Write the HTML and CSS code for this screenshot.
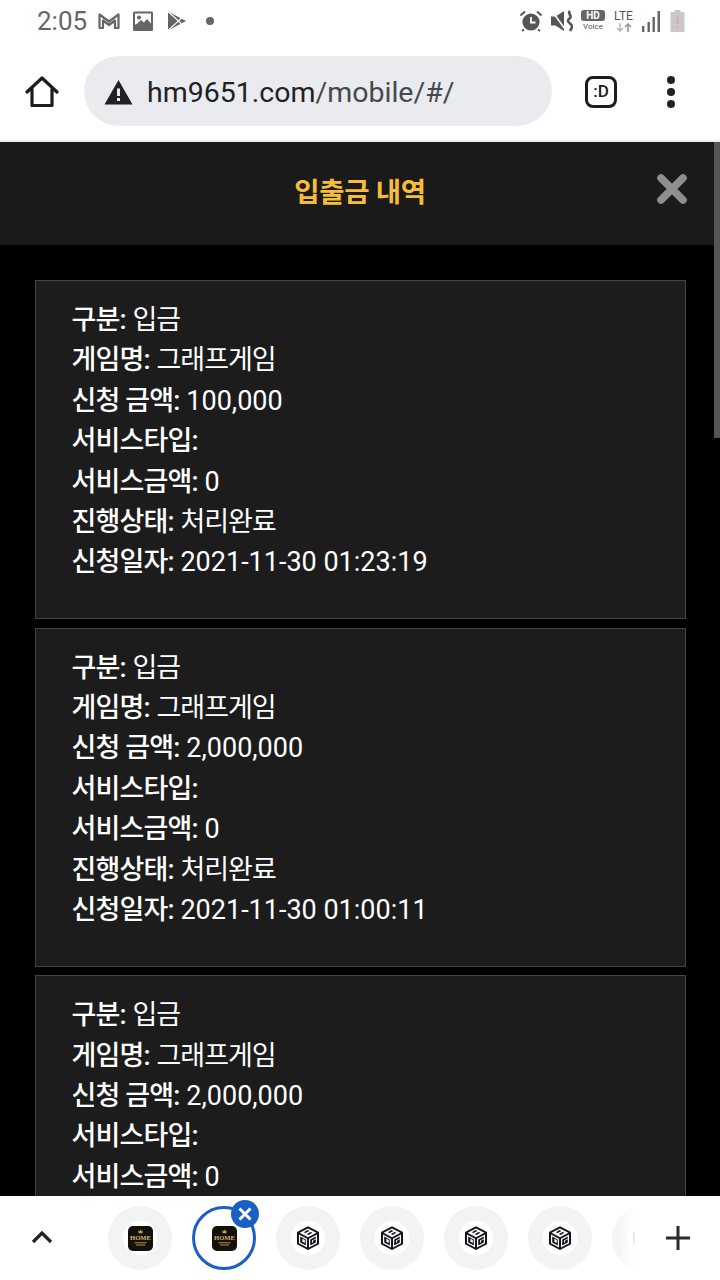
FILE: index.html
```html
<!DOCTYPE html>
<html lang="ko">
<head>
  <meta charset="utf-8"/>
  <meta name="viewport" content="width=device-width, initial-scale=1.0"/>
  <title>입출금 내역</title>
  <link rel="stylesheet" href="styles.css">
</head>
<body>

  <!-- Shared icons -->
  <svg class="defs" width="0" height="0">
    <symbol id="cube" viewBox="0 0 26 26">
      <path d="M13 1.2 24 7V19.2L13 25 2 19.2V7Z" fill="#16141c"/>
      <path d="M13 3.4 21.4 7.8 13 12.2 4.6 7.8Z" fill="#fff"/>
      <path d="M4 9.6 12 13.8V22.4L4 18.2Z" fill="#fff"/>
      <path d="M22 9.6 14 13.8V22.4L22 18.2Z" fill="#fff"/>
      <path d="M5.2 11.4 10.8 14.4V20.6L5.2 17.6Z" fill="#16141c"/>
      <path d="M7.4 13.8 9.8 15.1V18L7.4 16.7Z" fill="#fff"/>
      <path d="M20.8 11.4 15.2 14.4V20.6L20.8 17.6V14.2L18 15.7V17.2L17 17.8V15.4L20.8 13.4Z" fill="#16141c"/>
      <path d="M8.8 7.2 12.6 5.1 14.4 6 10.6 8.1ZM11.8 9 15.6 6.9 17.4 7.8 13.6 9.9Z" fill="#16141c"/>
    </symbol>
  </svg>

  <!-- Status bar -->
  <div class="status-bar">
    <div class="status-left">
      <span class="clock">2:05</span>
      <svg class="st-icon" width="24" height="18" viewBox="0 0 24 18"><path d="M2.5 16V2.5L12 9.5 21.5 2.5V16H18V8.5L12 13 6 8.5V16Z" fill="none" stroke="#666" stroke-width="2.2" stroke-linejoin="round"/></svg>
      <svg class="st-icon" width="22" height="20" viewBox="0 0 22 20"><rect x="1" y="0.5" width="20" height="19.5" rx="1.5" fill="#666"/><rect x="3" y="2.5" width="16" height="11" fill="#fff"/><circle cx="7" cy="6.5" r="2" fill="#666"/><path d="M3 14.5 9 9 12 11.5 15 8 19 12.5V14.5Z" fill="#666"/></svg>
      <svg class="st-icon play" width="20" height="20" viewBox="0 0 20 20"><path d="M1 0.5 19 10 1 19.5Z" fill="#666"/><path d="M1 .5 11.5 10 1 19.5M11.5 10 15 6.5M11.5 10 15 13.5" fill="none" stroke="#fff" stroke-width="1.1"/></svg>
      <span class="dot"></span>
    </div>
    <div class="status-right">
      <svg width="24" height="22" viewBox="0 0 24 22"><circle cx="12" cy="12" r="8.6" fill="#555"/><path d="M12 7V12.5H16.5" fill="none" stroke="#fff" stroke-width="1.8"/><path d="M1.5 5.5 6 1.5M22.5 5.5 18 1.5M5 19.5 3 21M19 19.5 21 21" stroke="#555" stroke-width="2"/></svg>
      <svg width="22" height="22" viewBox="0 0 22 22"><path d="M0 6.5H4.5L13 1V21L4.5 15.5H0Z" fill="#555"/><path d="M1 1 15 20.5" stroke="#fff" stroke-width="1.6"/><path d="M19 1C16 4 21.5 5.5 19 8S16 11 19 13.5 21.5 17 19 21" fill="none" stroke="#555" stroke-width="2.6"/></svg>
      <div class="hd-voice"><span class="hd">HD</span><span class="voice">Voice</span></div>
      <div class="lte"><span>LTE</span><svg width="16" height="9" viewBox="0 0 16 9"><path d="M4 0V8M1 5 4 8 7 5" fill="none" stroke="#bbb" stroke-width="1.6"/><path d="M12 9V1M9 4 12 1 15 4" fill="none" stroke="#999" stroke-width="1.6"/></svg></div>
      <svg class="signal" width="19" height="21" viewBox="0 0 19 21"><path d="M1 15H3.4V21H1ZM6.5 11H8.9V21H6.5ZM11.5 6H13.9V21H11.5ZM16.5 0H19V21H16.5Z" fill="#666"/></svg>
      <svg width="15" height="22" viewBox="0 0 15 22"><path d="M4.5 0H10.5V2H14.5V22H.5V2H4.5Z" fill="#c9c9c9"/><path d="M7.5 7V14" stroke="#e6a59a" stroke-width="2"/><circle cx="7.5" cy="17" r="1.1" fill="#e6a59a"/></svg>
    </div>
  </div>

  <!-- Toolbar -->
  <div class="toolbar">
    <svg class="home-btn" width="34" height="34" viewBox="0 0 34 34"><path d="M2 17 17 3 32 17M7 14V30.5H27V14" fill="none" stroke="#1c1c1c" stroke-width="3.2" stroke-linejoin="round" stroke-linecap="round"/></svg>
    <div class="url-bar">
      <svg width="29" height="26" viewBox="0 0 29 26"><path d="M14.5 1 28.5 25.5H.5Z" fill="#202124"/><path d="M13 9.5H16V17H13ZM13 19H16V22H13Z" fill="#e9ebef"/></svg>
      <span class="url">hm9651.com<span class="url-path">/mobile/#/</span></span>
    </div>
    <div class="face-btn">:D</div>
    <div class="more"><i></i><i></i><i></i></div>
  </div>

  <!-- Page -->
  <main class="page">
    <div class="scroll-thumb"></div>
    <header class="modal-head">
      <h1>입출금 내역</h1>
      <svg class="close" width="30" height="30" viewBox="0 0 30 30"><path d="M4 4 26 26M26 4 4 26" stroke="#8e8e8e" stroke-width="7.5" stroke-linecap="round"/></svg>
    </header>

    <div class="list">
      <section class="card">
        <p><b>구분:</b> <span class="ko">입금</span></p>
        <p><b>게임명:</b> <span class="ko">그래프게임</span></p>
        <p><b>신청 금액:</b> 100,000</p>
        <p><b>서비스타입:</b></p>
        <p><b>서비스금액:</b> 0</p>
        <p><b>진행상태:</b> <span class="ko">처리완료</span></p>
        <p><b>신청일자:</b> 2021-11-30 01:23:19</p>
      </section>
      <section class="card">
        <p><b>구분:</b> <span class="ko">입금</span></p>
        <p><b>게임명:</b> <span class="ko">그래프게임</span></p>
        <p><b>신청 금액:</b> 2,000,000</p>
        <p><b>서비스타입:</b></p>
        <p><b>서비스금액:</b> 0</p>
        <p><b>진행상태:</b> <span class="ko">처리완료</span></p>
        <p><b>신청일자:</b> 2021-11-30 01:00:11</p>
      </section>
      <section class="card">
        <p><b>구분:</b> <span class="ko">입금</span></p>
        <p><b>게임명:</b> <span class="ko">그래프게임</span></p>
        <p><b>신청 금액:</b> 2,000,000</p>
        <p><b>서비스타입:</b></p>
        <p><b>서비스금액:</b> 0</p>
      </section>
    </div>
  </main>

  <!-- Tab strip -->
  <nav class="tab-strip">
    <svg class="chevron" width="22" height="14" viewBox="0 0 22 14"><path d="M2 12 11 3 20 12" fill="none" stroke="#202124" stroke-width="3.2"/></svg>
    <div class="tabs">
      <div class="tab">
        <svg width="25" height="25" viewBox="0 0 25 25"><rect width="25" height="25" rx="5" fill="#14110c"/><path d="M10.2 4.2 11.2 5.6 12.5 3.6 13.8 5.6 14.8 4.2 14.4 7.2H10.6Z" fill="#c9a24d"/><text class="logo-word" x="12.5" y="14.2">HOME</text><path d="M6.5 16.8H18.5M8 19H17" stroke="#b99445" stroke-width="1"/></svg>
      </div>
      <div class="tab active">
        <svg width="25" height="25" viewBox="0 0 25 25"><rect width="25" height="25" rx="5" fill="#14110c"/><path d="M10.2 4.2 11.2 5.6 12.5 3.6 13.8 5.6 14.8 4.2 14.4 7.2H10.6Z" fill="#c9a24d"/><text class="logo-word" x="12.5" y="14.2">HOME</text><path d="M6.5 16.8H18.5M8 19H17" stroke="#b99445" stroke-width="1"/></svg>
        <span class="tab-close"><svg width="14" height="14" viewBox="0 0 14 14"><path d="M1.5 1.5 12.5 12.5M12.5 1.5 1.5 12.5" stroke="#fff" stroke-width="3"/></svg></span>
      </div>
      <div class="tab"><svg width="26" height="26"><use href="#cube"/></svg></div>
      <div class="tab"><svg width="26" height="26"><use href="#cube"/></svg></div>
      <div class="tab"><svg width="26" height="26"><use href="#cube"/></svg></div>
      <div class="tab"><svg width="26" height="26"><use href="#cube"/></svg></div>
      <div class="tab"><svg width="26" height="26"><use href="#cube"/></svg></div>
    </div>
    <div class="add-tab"><svg width="26" height="26" viewBox="0 0 26 26"><path d="M13 1V25M1 13H25" stroke="#2b2b2b" stroke-width="3"/></svg></div>
  </nav>

</body>
</html>
```

FILE: styles.css
```css
/* -------- Base -------- */
* { box-sizing: border-box; }
html, body {
  margin: 0;
  padding: 0;
  height: 1280px;
  overflow: hidden;
  font-family: Roboto, "Noto Sans CJK KR", sans-serif;
  background: #fff;
}
body {
  display: flex;
  flex-direction: column;
}
.defs { position: absolute; }

/* -------- Status bar -------- */
.status-bar {
  height: 42px;
  flex: none;
  display: flex;
  justify-content: space-between;
  align-items: center;
  padding: 0 35px 0 37px;
}
.status-left, .status-right {
  display: flex;
  align-items: center;
}
.clock {
  font-size: 26px;
  color: #666;
  margin-right: 10px;
}
.st-icon { margin-right: 11px; }
.st-icon.play { margin-left: 2px; margin-right: 19px; }
.dot {
  width: 8px;
  height: 8px;
  border-radius: 50%;
  background: #666;
}
.status-right { gap: 8px; }
.signal { margin-right: 2px; }
.hd-voice {
  display: flex;
  flex-direction: column;
  align-items: center;
  width: 24px;
}
.hd {
  width: 24px;
  height: 11px;
  border-radius: 3px;
  background: #666;
  color: #fff;
  font-size: 10px;
  font-weight: 700;
  line-height: 11px;
  text-align: center;
}
.voice {
  font-size: 8px;
  line-height: 11px;
  color: #555;
}
.lte {
  display: flex;
  flex-direction: column;
  align-items: center;
  width: 21px;
  margin-right: -1px;
  font-size: 12px;
  line-height: 13px;
  color: #555;
}

/* -------- Toolbar -------- */
.toolbar {
  height: 100px;
  flex: none;
  display: flex;
  align-items: center;
  padding: 2px 0 0 25px;
  border-bottom: 2px solid #eee;
}
.home-btn { flex: none; }
.url-bar {
  width: 468px;
  height: 70px;
  margin: -2px 0 0 25px;
  padding: 2px 0 0 20px;
  border-radius: 35px;
  background: #e9ebef;
  display: flex;
  align-items: center;
  gap: 14px;
}
.url {
  font-size: 28.5px;
  color: #202124;
  white-space: nowrap;
}
.url-path { color: #45484d; }
.face-btn {
  width: 32px;
  height: 32px;
  margin-left: 33px;
  border: 3px solid #1c1c1c;
  border-radius: 8px;
  font-size: 17px;
  font-weight: 500;
  line-height: 25px;
  text-align: center;
  color: #1c1c1c;
}
.more {
  margin-left: 50px;
  display: flex;
  flex-direction: column;
  gap: 4px;
}
.more i {
  width: 8px;
  height: 8px;
  border-radius: 50%;
  background: #202124;
}

/* -------- Page -------- */
.page {
  flex: 1;
  min-height: 0;
  position: relative;
  overflow: hidden;
  background: #000;
}
.scroll-thumb {
  position: absolute;
  top: 0;
  right: 0;
  width: 6px;
  height: 296px;
  background: #555;
  z-index: 2;
}
.modal-head {
  height: 103px;
  display: flex;
  align-items: center;
  justify-content: center;
  position: relative;
  background: #1a1a1a;
}
.modal-head h1 {
  margin: 0 0 8px;
  font-size: 27.5px;
  font-weight: 700;
  letter-spacing: -.3px;
  color: #f6bd3b;
}
.close {
  position: absolute;
  top: 32px;
  right: 33px;
}
.list {
  display: flex;
  flex-direction: column;
  gap: 8.6px;
  padding: 35px 34px 0 35px;
}
.card {
  flex: none;
  height: 339px;
  padding: 19px 35.5px 0;
  background: #1c1c1c;
  border: 1px solid #444;
  color: #fff;
  font-size: 27px;
}
.card p {
  margin: 0;
  height: 40.4px;
  line-height: 40.4px;
  white-space: nowrap;
}
.card b {
  font-weight: 500;
  letter-spacing: -.85px;
}
.card .ko { letter-spacing: -1px; }

/* -------- Tab strip -------- */
.tab-strip {
  height: 84px;
  flex: none;
  position: relative;
  display: flex;
  align-items: center;
  background: #fff;
}
.chevron {
  position: absolute;
  left: 31px;
  top: 34px;
}
.tabs {
  position: absolute;
  left: 108px;
  top: 10px;
  width: 532px;
  display: flex;
  gap: 20px;
}
.tab {
  flex: none;
  width: 64px;
  height: 64px;
  border-radius: 50%;
  display: flex;
  align-items: center;
  justify-content: center;
  background: radial-gradient(circle, #fff 0 17px, #f1f3f4 17.5px);
}
.tab.active {
  background: #fff;
  border: 3px solid #1a5fc4;
}
.logo-word {
  font-family: "Liberation Serif", serif;
  font-size: 6.6px;
  font-weight: 700;
  fill: #d8b568;
  text-anchor: middle;
}
.tab-close {
  position: absolute;
  top: -6px;
  left: 123px;
  width: 28px;
  height: 28px;
  border-radius: 50%;
  background: #1a5fc4;
  display: flex;
  align-items: center;
  justify-content: center;
}
.add-tab {
  position: absolute;
  right: 0;
  top: 0;
  width: 108px;
  height: 84px;
  padding-left: 24px;
  display: flex;
  align-items: center;
  justify-content: center;
  background: linear-gradient(90deg, rgba(255,255,255,0) 0, #fff 24px);
}
```
